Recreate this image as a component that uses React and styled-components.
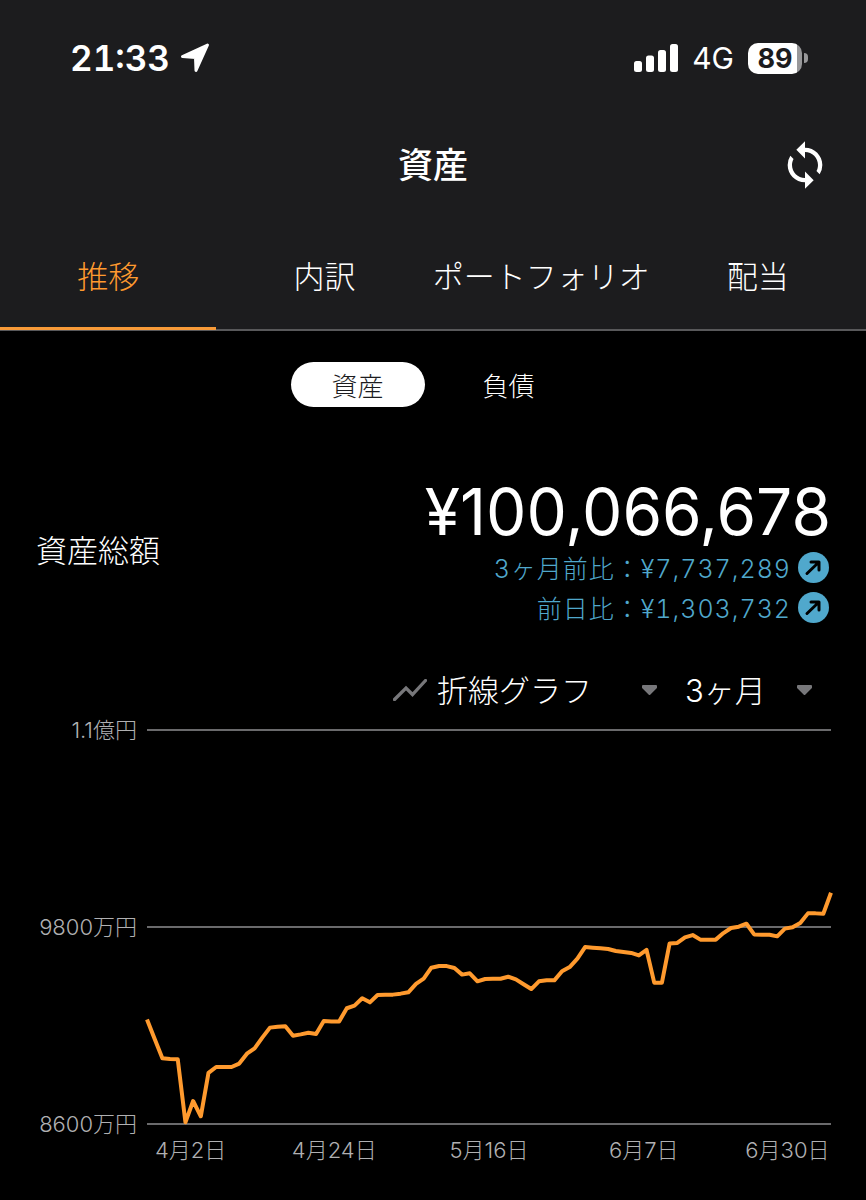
import React from "react";
import styled, { createGlobalStyle } from "styled-components";
import { MdSync } from "react-icons/md";

const GlobalStyle = createGlobalStyle`
  *, *::before, *::after { box-sizing: border-box; }
  body {
    margin: 0;
    background: #000;
    color: #fff;
    font-family: Inter, "Noto Sans CJK JP", sans-serif;
    font-weight: 300;
  }
  button, select { font: inherit; color: inherit; border: 0; padding: 0; margin: 0; background: none; cursor: pointer; }
`;

const Header = styled.header`
  background: #1c1c1e;
`;

const StatusBar = styled.div`
  display: flex;
  align-items: center;
  justify-content: space-between;
  height: 116px;
  padding: 0 58px 0 70px;
`;

const StatusGroup = styled.div`
  display: flex;
  align-items: center;
  gap: ${(p) => p.$gap}px;
`;

const Clock = styled.span`
  font-size: 35px;
  font-weight: 600;
  font-variant-numeric: tabular-nums;
`;

const Network = styled.span`
  font-size: 30px;
  font-weight: 400;
`;

const Battery = styled.div`
  display: flex;
  align-items: center;
  gap: 2px;
`;

const BatteryLevel = styled.span`
  width: 54px;
  height: 31px;
  border-radius: 10px;
  background: linear-gradient(to right, #fff 49px, #98989a 49px);
  color: #1c1c1e;
  font-size: 27px;
  line-height: 31px;
  font-weight: 700;
  text-align: center;
`;

const BatteryCap = styled.span`
  width: 4px;
  height: 10px;
  border-radius: 0 4px 4px 0;
  background: #98989a;
`;

const TitleBar = styled.div`
  display: grid;
  grid-template-columns: 1fr auto 1fr;
  align-items: center;
  height: 98px;
  padding: 0 35px;
`;

const Title = styled.h1`
  grid-column: 2;
  margin: 0;
  font-size: 35px;
  line-height: 52px;
  font-weight: 500;
`;

const SyncButton = styled.button`
  display: flex;
  justify-self: end;
`;

const Tabs = styled.nav`
  display: grid;
  grid-template-columns: repeat(4, 1fr);
  height: 117px;
  border-bottom: 2px solid #58585a;
`;

const Tab = styled.button`
  && {
    height: 116px;
    padding-top: 8px;
    font-size: 31px;
    color: ${(p) => (p.$active ? "#ff9a2e" : "#fff")};
    border-bottom: 3px solid ${(p) => (p.$active ? "#f79a38" : "transparent")};
    white-space: nowrap;
  }
`;

const Main = styled.main`
  padding: 31px 35px 36px;
`;

const Switch = styled.div`
  display: flex;
  justify-content: center;
  gap: 17px;
`;

const SwitchButton = styled.button`
  && {
    width: 134px;
    height: 45px;
    border-radius: 23px;
    font-size: 26px;
    line-height: 45px;
    padding-top: 2px;
    background: ${(p) => (p.$active ? "#fff" : "transparent")};
    color: ${(p) => (p.$active ? "#1c1c1e" : "#fff")};
  }
`;

const Summary = styled.section`
  display: flex;
  align-items: center;
  justify-content: space-between;
  margin-top: 69px;
`;

const SummaryLabel = styled.h2`
  margin: 0;
  padding: 0 0 6px 1px;
  font-size: 31px;
  font-weight: 300;
`;

const Figures = styled.div`
  display: flex;
  flex-direction: column;
  align-items: flex-end;
`;

const Total = styled.div`
  font-size: 64px;
  line-height: 71px;
  font-weight: 400;
`;

const Change = styled.div`
  display: flex;
  align-items: center;
  gap: 7px;
  height: 40px;
  padding-right: 2px;
  color: #50a8cc;
  font-size: 25px;
  font-variant-numeric: tabular-nums;
  letter-spacing: 1px;
`;

const Filters = styled.div`
  display: flex;
  align-items: center;
  justify-content: flex-end;
  height: 48px;
  margin-top: 39px;
  padding-right: 18px;
`;

const Picker = styled.label`
  display: flex;
  align-items: center;
  margin-left: ${(p) => p.$before}px;
`;

const Select = styled.select`
  && {
    appearance: none;
    width: ${(p) => p.$width}px;
    height: 48px;
    margin-left: 10px;
    font-size: 31px;
    outline: none;
  }
  option { background: #1c1c1e; }
`;

const Chart = styled.figure`
  display: grid;
  grid-template-columns: 102px 1fr;
  column-gap: 10px;
  margin: 1px 0 0;
  color: #b0b0b2;
  font-size: 22px;
`;

const YAxis = styled.div`
  display: flex;
  flex-direction: column;
  justify-content: space-between;
  text-align: right;
  line-height: 30px;
  white-space: nowrap;
`;

const Plot = styled.svg`
  display: block;
  width: 100%;
  height: 394px;
  margin: 15px 0;
  overflow: visible;
`;

const XAxis = styled.div`
  grid-column: 2;
  display: grid;
  grid-template-columns: 87fr 200fr 109fr 200fr 87fr;
  line-height: 22px;
  text-align: center;
  white-space: nowrap;
`;

// Total assets per day, in units of 10,000 yen
const assets = [
  9236, 9118, 9000, 8996, 8994, 8610, 8740, 8647, 8911, 8947, 8947, 8947, 8968, 9028, 9061,
  9126, 9187, 9193, 9195, 9138, 9146, 9156, 9148, 9227, 9225, 9225, 9305, 9321, 9366, 9341,
  9386, 9388, 9388, 9394, 9402, 9453, 9485, 9552, 9562, 9562, 9550, 9510, 9518, 9469, 9483,
  9485, 9485, 9497, 9481, 9451, 9422, 9469, 9475, 9475, 9530, 9556, 9607, 9678, 9674, 9670,
  9666, 9654, 9648, 9642, 9627, 9660, 9461, 9461, 9700, 9703, 9737, 9751, 9723, 9723, 9723,
  9763, 9794, 9802, 9820, 9755, 9753, 9753, 9743, 9790, 9798, 9824, 9883, 9883, 9881, 10009,
];
const MAX = 11000;
const MIN = 8600;
const W = 684;
const H = 394;
const points = assets
  .map((v, i) => `${(i * W) / (assets.length - 1)},${((MAX - v) * H) / (MAX - MIN)}`)
  .join(" ");

const LocationIcon = () => (
  <svg width="30" height="30" viewBox="0 0 30 30" aria-hidden="true">
    <path
      d="M27.500 2 L2.500 13.500 L15.500 14.500 L16 27.500 Z"
      fill="#fff"
      stroke="#fff"
      strokeWidth="3"
      strokeLinejoin="round"
    />
  </svg>
);

const SignalIcon = () => (
  <svg width="44" height="28" viewBox="0 0 44 28" fill="#fff" aria-hidden="true">
    <rect x="0" y="17" width="8" height="11" rx="2.500" />
    <rect x="12" y="11.500" width="8" height="16.500" rx="2.500" />
    <rect x="24" y="6" width="8" height="22" rx="2.500" />
    <rect x="36" y="0" width="8" height="28" rx="2.500" />
  </svg>
);

const UpIcon = () => (
  <svg width="31" height="31" viewBox="0 0 31 31" aria-hidden="true">
    <circle cx="15.500" cy="15.500" r="15.500" fill="#50a8cc" />
    <path d="M9 21.500 L20.500 10.500 M13 10 H21 V18" fill="none" stroke="#000" strokeWidth="3" strokeLinecap="round" strokeLinejoin="round" />
  </svg>
);

const LineIcon = () => (
  <svg width="34" height="22" viewBox="0 0 34 22" aria-hidden="true">
    <path d="M1.500 20.500 L13 9 L19.500 15.500 L32.500 1.500" fill="none" stroke="#77777a" strokeWidth="3.300" strokeLinecap="round" strokeLinejoin="miter" />
  </svg>
);

const CaretIcon = () => (
  <svg width="17" height="12" viewBox="0 0 17 12" aria-hidden="true">
    <path d="M2 2 H15 V3.500 L8.500 10 L2 3.500 Z" fill="#77777a" stroke="#77777a" strokeWidth="2" strokeLinejoin="round" />
  </svg>
);

export default function App() {
  return (
    <>
      <GlobalStyle />
      <Header>
        <StatusBar>
          <StatusGroup $gap={10}>
            <Clock>21:33</Clock>
            <LocationIcon />
          </StatusGroup>
          <StatusGroup $gap={14}>
            <SignalIcon />
            <Network>4G</Network>
            <Battery>
              <BatteryLevel>89</BatteryLevel>
              <BatteryCap />
            </Battery>
          </StatusGroup>
        </StatusBar>
        <TitleBar>
          <Title>資産</Title>
          <SyncButton aria-label="更新">
            <MdSync size={52} />
          </SyncButton>
        </TitleBar>
        <Tabs>
          <Tab $active>推移</Tab>
          <Tab>内訳</Tab>
          <Tab>ポートフォリオ</Tab>
          <Tab>配当</Tab>
        </Tabs>
      </Header>
      <Main>
        <Switch>
          <SwitchButton $active>資産</SwitchButton>
          <SwitchButton>負債</SwitchButton>
        </Switch>
        <Summary>
          <SummaryLabel>資産総額</SummaryLabel>
          <Figures>
            <Total>¥100,066,678</Total>
            <Change>
              3ヶ月前比：¥7,737,289
              <UpIcon />
            </Change>
            <Change>
              前日比：¥1,303,732
              <UpIcon />
            </Change>
          </Figures>
        </Summary>
        <Filters>
          <Picker $before={0}>
            <LineIcon />
            <Select $width={204} aria-label="グラフの種類" defaultValue="line">
              <option value="line">折線グラフ</option>
            </Select>
            <CaretIcon />
          </Picker>
          <Picker $before={17}>
            <Select $width={111} aria-label="期間" defaultValue="3m">
              <option value="3m">3ヶ月</option>
            </Select>
            <CaretIcon />
          </Picker>
        </Filters>
        <Chart>
          <YAxis>
            <span>1.1億円</span>
            <span>9800万円</span>
            <span>8600万円</span>
          </YAxis>
          <Plot viewBox={`0 0 ${W} ${H}`} preserveAspectRatio="none" role="img" aria-label="資産総額の推移">
            {[0, H / 2, H].map((y) => (
              <line key={y} x1="0" x2={W} y1={y} y2={y} stroke="#6a6a6c" strokeWidth="2" vectorEffect="non-scaling-stroke" />
            ))}
            <polyline points={points} fill="none" stroke="#ff9a2e" strokeWidth="4" strokeLinejoin="round" vectorEffect="non-scaling-stroke" />
          </Plot>
          <XAxis>
            <span>4月2日</span>
            <span>4月24日</span>
            <span>5月16日</span>
            <span>6月7日</span>
            <span>6月30日</span>
          </XAxis>
        </Chart>
      </Main>
    </>
  );
}
